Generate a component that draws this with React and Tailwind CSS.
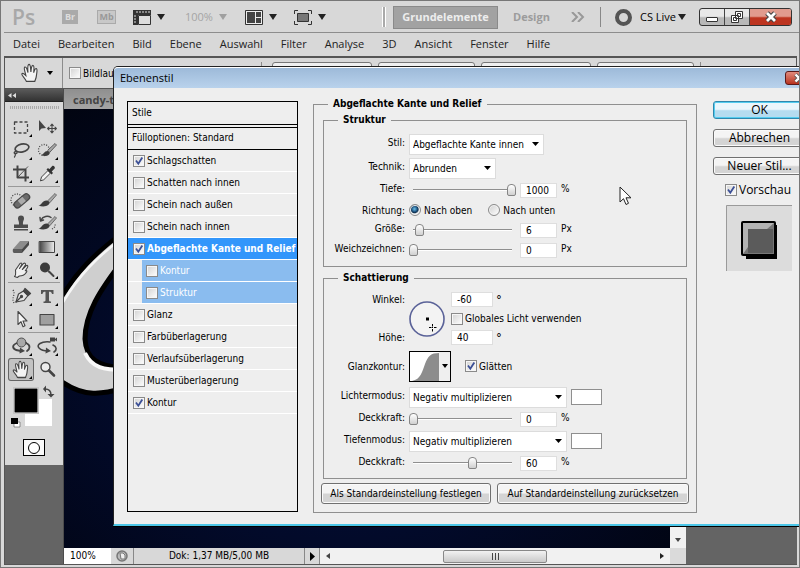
import React from "react";

const UI = "font-['DejaVu_Sans_Condensed','DejaVu_Sans',sans-serif]";
const SEGOE = "font-['Open_Sans','Noto_Sans',sans-serif]";

function Tri({ className = "text-[#222]" }) {
  return (
    <svg viewBox="0 0 8 6" className={`h-[6px] w-[8px] shrink-0 ${className}`} aria-hidden="true">
      <path d="M0 0h8L4 6z" fill="currentColor" />
    </svg>
  );
}

function Check({ id, checked, label, bold, className = "" }) {
  return (
    <span className={`flex items-center gap-[2px] ${className}`}>
      <span className="grid h-[12px] w-[12px] shrink-0">
        <input
          id={id}
          type="checkbox"
          defaultChecked={checked}
          className="peer col-start-1 row-start-1 h-[12px] w-[12px] appearance-none border border-[#8a8a8a] bg-gradient-to-br from-[#d2d2d2] to-white shadow-[inset_0_0_0_1px_#f6f6f6]"
        />
        <svg viewBox="0 0 12 12" className="pointer-events-none col-start-1 row-start-1 hidden h-[12px] w-[12px] peer-checked:block">
          <path d="M3 5.5l2.3 3.2L9.3 2.4" fill="none" stroke="#3b4f96" strokeWidth="1.8" />
        </svg>
      </span>
      <label htmlFor={id} className={`whitespace-nowrap ${bold ? "font-bold" : ""}`}>{label}</label>
    </span>
  );
}

function Dropdown({ id, value, width }) {
  return (
    <span className={`grid h-[21px] items-center border border-[#dcdcdc] bg-white ${width}`}>
      <select id={id} defaultValue={value} className="col-start-1 row-start-1 h-full w-full appearance-none bg-transparent pl-[3px] outline-none">
        <option>{value}</option>
      </select>
      <svg viewBox="0 0 7 4" className="pointer-events-none col-start-1 row-start-1 mr-[4px] h-[4px] w-[7px] justify-self-end">
        <path d="M0 0h7L3.5 4z" />
      </svg>
    </span>
  );
}

function NumberBox({ id, value, width = "w-[37px]", label }) {
  return (
    <input id={id} aria-label={label} defaultValue={value} className={`h-[15px] border border-[#dedede] bg-white pl-[5px] outline-none ${width}`} />
  );
}

function Slider({ label, value, max = 100 }) {
  return (
    <input
      type="range"
      aria-label={label}
      defaultValue={value}
      max={max}
      className="h-[14px] w-[107px] appearance-none bg-transparent [&::-webkit-slider-runnable-track]:h-[2px] [&::-webkit-slider-runnable-track]:bg-[linear-gradient(#8f8f8f_50%,#ffffff_50%)] [&::-webkit-slider-runnable-track]:bg-[length:99px_2px] [&::-webkit-slider-runnable-track]:bg-center [&::-webkit-slider-runnable-track]:bg-no-repeat [&::-webkit-slider-thumb]:-mt-[5px] [&::-webkit-slider-thumb]:h-[12px] [&::-webkit-slider-thumb]:w-[9px] [&::-webkit-slider-thumb]:appearance-none [&::-webkit-slider-thumb]:rounded-t-[4px] [&::-webkit-slider-thumb]:rounded-b-[2px] [&::-webkit-slider-thumb]:border [&::-webkit-slider-thumb]:border-[#858585] [&::-webkit-slider-thumb]:bg-gradient-to-b [&::-webkit-slider-thumb]:from-white [&::-webkit-slider-thumb]:to-[#d0d0d0]"
    />
  );
}

function Row({ label, htmlFor, tall, flat, children }) {
  return (
    <div className={`flex items-center gap-[4px] ${tall ? "h-6" : "h-5"}`}>
      <label htmlFor={htmlFor} className={`w-[81px] shrink-0 text-right whitespace-nowrap ${flat ? "" : "pb-[4px]"}`}>{label}</label>
      {children}
    </div>
  );
}

function SliderRow({ id, label, value, max, unit }) {
  return (
    <Row label={label} htmlFor={id}>
      <Slider label={`${label} Regler`} value={value} max={max} />
      <NumberBox id={id} value={value} />
      <span className="pb-[4px]">{unit}</span>
    </Row>
  );
}

function Radio({ id, label, checked, className = "" }) {
  return (
    <span className={`flex items-center gap-[3px] ${className}`}>
      <input
        id={id}
        type="radio"
        name="richtung"
        defaultChecked={checked}
        className="h-[12px] w-[12px] appearance-none rounded-full border border-[#8a8a8a] bg-gradient-to-br from-[#cfcfcf] to-white shadow-[inset_0_0_0_1px_#f4f4f4] checked:bg-[radial-gradient(circle_at_45%_40%,#6ec3ec_0,#1b4f7c_35%,#12324f_45%,#f4f4f4_60%)]"
      />
      <label htmlFor={id} className="whitespace-nowrap">{label}</label>
    </span>
  );
}

function Group({ title, indent, className = "", children }) {
  return (
    <fieldset className={`min-w-0 border border-[#8f8f8f] ${className}`}>
      <legend className={`px-[5px] text-[10px] leading-[14px] font-bold ${indent}`}>{title}</legend>
      {children}
    </fieldset>
  );
}

const effects = [
  ["Schlagschatten", true],
  ["Schatten nach innen", false],
  ["Schein nach außen", false],
  ["Schein nach innen", false],
  ["Abgeflachte Kante und Relief", true, "active"],
  ["Kontur", false, "sub"],
  ["Struktur", false, "sub"],
  ["Glanz", false],
  ["Farbüberlagerung", false],
  ["Verlaufsüberlagerung", false],
  ["Musterüberlagerung", false],
  ["Kontur", true],
];

function StyleList() {
  return (
    <div className="w-[171px] shrink-0 self-stretch border border-black leading-[14px]">
      <div className="h-[23px] border-b border-black pt-[4px] pl-[4px]">Stile</div>
      <div className="mt-[2px] h-[23px] border-t border-b border-black pt-[3px] pl-[4px]">Fülloptionen: Standard</div>
      <ul>
        {effects.map(([name, on, kind], i) => (
          <li key={i} className={`flex h-[22px] border-b border-white ${kind === "sub" ? "pl-[14px]" : ""}`}>
            <Check
              id={`effect-${i}`}
              checked={on}
              label={name}
              bold={kind === "active"}
              className={`flex-1 ${kind === "active" ? "bg-[#3296fb] text-white" : ""} ${kind === "sub" ? "bg-[#8abcef] pl-[4px] text-white" : "pl-[5px]"}`}
            />
          </li>
        ))}
      </ul>
    </div>
  );
}

function Structure() {
  return (
    <Group title="Struktur" indent="ml-[14px]" className="pb-[6px]">
      <div className="pt-[5px]">
        <Row label="Stil:" htmlFor="stil" tall><Dropdown id="stil" value="Abgeflachte Kante innen" width="w-[135px]" /></Row>
        <Row label="Technik:" htmlFor="technik" tall><Dropdown id="technik" value="Abrunden" width="w-[87px]" /></Row>
        <SliderRow id="tiefe" label="Tiefe:" value={1000} max={1000} unit="%" />
        <Row label="Richtung:" htmlFor="oben" flat>
          <Radio id="oben" label="Nach oben" checked />
          <Radio id="unten" label="Nach unten" className="ml-[12px]" />
        </Row>
        <SliderRow id="groesse" label="Größe:" value={6} unit="Px" />
        <SliderRow id="weich" label="Weichzeichnen:" value={0} unit="Px" />
      </div>
    </Group>
  );
}

function DegreeField({ id, value }) {
  return (
    <span className="flex h-[15px] items-center gap-[3px]">
      <NumberBox id={id} value={value} width="w-[42px]" />
      <span className="text-[13px] leading-[14px]">°</span>
    </span>
  );
}

function Shading() {
  return (
    <Group title="Schattierung" indent="ml-[14px]" className="mt-[4px] pb-[5px]">
      <div className="flex gap-[4px] pt-[7px] pb-[2px]">
        <div className="flex w-[81px] flex-col justify-between pt-[1px] text-right leading-[14px]">
          <label htmlFor="winkel">Winkel:</label>
          <label htmlFor="hoehe">Höhe:</label>
        </div>
        <svg viewBox="0 0 36 36" className="mt-[9px] h-[36px] w-[36px]">
          <circle cx="18" cy="18" r="17" fill="#f3f3f3" stroke="#5a6298" strokeWidth="1.6" />
          <path d="M17 16.500h3v3h-3z" />
          <path d="M23.500 23v2.500M23.500 28v2.500M20 26.500h2.500M25 26.500h2.500" stroke="#000" />
          <path d="M23 26h1v1h-1z" />
        </svg>
        <div className="ml-[2px] flex flex-col gap-[4px]">
          <DegreeField id="winkel" value="-60" />
          <Check id="global" label="Globales Licht verwenden" className="h-[15px]" />
          <DegreeField id="hoehe" value="40" />
        </div>
      </div>
      <div className="flex h-[38px] items-center gap-[4px]">
        <span className="w-[81px] text-right">Glanzkontur:</span>
        <button aria-label="Glanzkontur" className="flex h-[31px] w-[42px] items-center border border-black bg-white">
          <svg viewBox="0 0 29 29" className="h-[29px] w-[29px]">
            <path d="M2 29C11 27 12 20 15 12C18 4 21 1 29 1V29z" fill="#8d8d8d" />
          </svg>
          <span className="flex h-full flex-1 items-center justify-center bg-[#efefef]">
            <svg viewBox="0 0 6 4" className="h-[4px] w-[6px]"><path d="M0 0h6L3 4z" /></svg>
          </span>
        </button>
        <Check id="glaetten" label="Glätten" checked className="ml-[10px]" />
      </div>
      <Row label="Lichtermodus:" htmlFor="licht" tall>
        <Dropdown id="licht" value="Negativ multiplizieren" width="w-[158px]" />
        <button aria-label="Lichterfarbe" className="h-[16px] w-[31px] border border-[#8f8f8f] bg-white" />
      </Row>
      <SliderRow id="deck1" label="Deckkraft:" value={0} unit="%" />
      <Row label="Tiefenmodus:" htmlFor="tiefen" tall>
        <Dropdown id="tiefen" value="Negativ multiplizieren" width="w-[158px]" />
        <button aria-label="Tiefenfarbe" className="h-[16px] w-[31px] border border-[#8f8f8f] bg-white" />
      </Row>
      <SliderRow id="deck2" label="Deckkraft:" value={60} unit="%" />
    </Group>
  );
}

const pushButton = "rounded-[3px] border border-[#707070] bg-gradient-to-b from-[#f4f4f4] from-45% to-[#d4d4d4] to-55% shadow-[inset_0_0_0_1px_#fafafa] whitespace-nowrap";

function Dialog() {
  return (
    <section className={`absolute top-[65px] left-[112px] w-[707px] rounded-t-[5px] border border-b-2 border-[#222] border-b-[#4cc6e8] bg-[#eeeeee] text-[10px] text-black shadow-[0_1px_0_#000] ${UI}`}>
      <header className="flex h-[21px] items-center justify-between rounded-t-[4px] border-t border-white bg-gradient-to-b from-[#9dbad9] to-[#b9d2ec] pl-[6px]">
        <h1 className={`text-[11px] ${SEGOE}`}>Ebenenstil</h1>
        <button aria-label="Schließen" className="mr-[6px] flex h-[14px] w-[28px] items-center justify-center rounded-[3px] border border-[#5b1a1a] bg-gradient-to-b from-[#e08a7c] to-[#b8301c]">
          <svg viewBox="0 0 12 10" className="h-[10px] w-[12px]"><path d="M2.500 1.500l7 7M9.500 1.500l-7 7" stroke="#555" strokeWidth="4" /><path d="M2.500 1.500l7 7M9.500 1.500l-7 7" stroke="#fff" strokeWidth="2.400" /></svg>
        </button>
      </header>
      <div className="flex px-[13px] pt-[9px] pb-[11px]">
        <div className="flex pt-[4px] pb-[1px]"><StyleList /></div>
        <Group title="Abgeflachte Kante und Relief" indent="ml-[5px]" className="ml-[15px] w-[384px] shrink-0 px-[9px] pb-[8px]">
          <div className="pt-[2px]">
            <Structure />
            <Shading />
            <div className="-mx-[2px] mt-[4px] flex gap-[6px]">
              <button className={`h-[21px] flex-1 ${pushButton}`}>Als Standardeinstellung festlegen</button>
              <button className={`h-[21px] w-[192px] ${pushButton}`}>Auf Standardeinstellung zurücksetzen</button>
            </div>
          </div>
        </Group>
        <div className={`ml-[16px] flex w-[93px] shrink-0 flex-col pt-[4px] text-[12px] ${SEGOE}`}>
          <div className="flex flex-col gap-[10px]">
            <button className="h-[18px] rounded-[3px] border border-[#2f87ad] bg-gradient-to-b from-[#eaf6fc] from-45% to-[#b5dcf0] to-55% leading-[14px] shadow-[inset_0_0_0_1px_#54cdf0]">OK</button>
            <button className={`h-[18px] leading-[14px] ${pushButton}`}>Abbrechen</button>
            <button className={`h-[18px] leading-[14px] ${pushButton}`}>Neuer Stil...</button>
          </div>
          <Check id="vorschau" label="Vorschau" checked className="mt-[8px] h-[14px] pl-[12px]" />
          <svg viewBox="0 0 66 66" className="mt-[8px] ml-[13px] h-[66px] w-[66px]">
            <path d="M0 0h66v66H0z" fill="#dcdcdc" />
            <path d="M.5 66V.5H66" fill="none" stroke="#9a9a9a" />
            <path d="M20 20h31v34H20z" />
            <rect x="15" y="16" width="35" height="35" rx="2" />
            <path d="M17 18h31v31H17z" fill="#777" />
            <path d="M17 18h31l-7 6H22v20l-5 5z" fill="#b4b4b4" />
            <path d="M22 24h25v24H22z" fill="#5b5b5b" />
            <path d="M17 49l5-7v6h26v1zM48 18l-1 30h1z" fill="#777" />
          </svg>
        </div>
      </div>
    </section>
  );
}

const S = ({ children, more = true }) => (
  <svg viewBox="0 0 26 23" className="h-[23px] w-[26px]" fill="none" stroke="#444" strokeWidth="1.300" strokeLinecap="round" strokeLinejoin="round">
    {children}
    {more && <path d="M24 18v3h-3z" fill="#000" stroke="none" />}
  </svg>
);

const Hand = () => (
  <>
    <path d="M9.500 19.500C8.500 16.500 4.500 13.500 5.200 12.300C6.200 11 8 13 9 14C8.500 10.500 6.500 6.500 8 5.800C9.600 5.300 10.300 8.500 11 11C10.800 8 10.300 3.500 12 3.300C13.700 3.200 13.500 7.500 13.800 10.500C14 8 14.300 4 15.900 4.300C17.300 4.600 16.700 8.500 16.500 11.200C17 9.500 17.800 6.800 19 7.300C20.500 8 19.200 12 19 14.500C18.800 17 17.800 18 17.500 19.500z" fill="#f3f3f3" stroke="#444" strokeWidth="1.100" />
    <path d="M10 19.500h7.500" />
  </>
);

const Brush = () => (
  <>
    <path d="M13.500 12L21 4.500l1.500 1.500L16 13.500z" fill="#aaa" stroke="#555" strokeWidth=".8" />
    <path d="M4.500 16.500C8 16 8 11.500 12.500 11.500C15.500 12 16.500 14 14.500 15.800C12 17.800 8 18 4.500 16.500z" fill="#3c3c3c" stroke="none" />
  </>
);

const tools = [
  [
    ["Auswahlrechteck", <rect key="a" x="6.500" y="6" width="13" height="11" strokeDasharray="3 2" strokeLinecap="butt" />],
    ["Verschieben", <g key="a"><path d="M5 4v11l2.500-2.500L12 12z" fill="#444" stroke="none" /><path d="M18 8.500v8M14 12.500h8M16.700 9.700L18 8.200l1.300 1.500M16.700 15.300L18 16.800l1.300-1.500M15 11.200l-1.400 1.300 1.400 1.300M21 11.200l1.400 1.300-1.400 1.300" strokeWidth="1.100" /></g>, false],
    ["Lasso", <g key="a"><ellipse cx="14" cy="9" rx="7" ry="4" transform="rotate(-12 14 9)" strokeWidth="1.700" /><path d="M8 12.500c-2 0-2.500 2-.6 2.200s2.300-1.500.6-2.200M7 14.500c1 1.500.5 2.500-.5 3.500" /></g>],
    ["Schnellauswahl", <g key="a"><circle cx="10" cy="11" r="5.500" strokeDasharray="1 1.500" strokeLinecap="butt" /><path d="M14 11l7-6.500 1.500 1.500-6.500 7z" fill="#aaa" strokeWidth=".8" /><path d="M7 16c3-.5 3-4 6.500-4 2.500.5 3 2.500 1 4s-4.500 1.300-7.500 0z" fill="#3c3c3c" stroke="none" /></g>],
    ["Freistellen", <g key="a" strokeLinecap="butt"><path d="M9.500 3.500v12H21M5 7.500h12.500v12" strokeWidth="2" /><path d="M10 15l10-10.500" strokeWidth=".9" /></g>],
    ["Pipette", <g key="a"><path d="M6.500 18.500l1-3.500 6.500-6.500 2.500 2.500-6.500 6.500z" fill="#f2f2f2" strokeWidth="1" /><path d="M12.500 7.500l5 5 1.500-1.500-1.300-1.500 3-3C21.500 5 19.500 3 18 4.200l-2.700 3L14 6z" fill="#333" stroke="none" /></g>],
  ],
  [
    ["Reparaturpinsel", <g key="a"><circle cx="9" cy="11" r="6" strokeDasharray="1 1.500" strokeLinecap="butt" /><rect x="5" y="8.500" width="18" height="6.500" rx="3" transform="rotate(-40 14 12)" fill="#6b6b6b" stroke="#4a4a4a" /><rect x="11" y="9" width="6" height="5.500" transform="rotate(-40 14 12)" fill="#aaa" stroke="none" /></g>],
    ["Pinsel", <Brush key="a" />],
    ["Stempel", <g key="a" fill="#4c4c4c" stroke="none"><path d="M10 6.500a3 3 0 016 0c0 2-1.200 2.500-1 6h5v3.500H6v-3.500h5c.2-3.500-1-4-1-6zM6 17h14v1.500H6z" /></g>],
    ["Protokollpinsel", <g key="a"><Brush /><path d="M7 8c2-4 7-4.500 10-2.500M6 5.500l.5 3.500 3-1" strokeWidth="1.500" /><path d="M18 17c3-1.500 3.500-3 3-6" strokeDasharray="1 1.500" strokeLinecap="butt" /></g>],
    ["Radiergummi", <g key="a" stroke="none"><path d="M5 14L12 6h9l-7 8z" fill="#8c8c8c" /><path d="M5 14h9v4H6c-1.300-.5-1.500-2-1-4z" fill="#5b5b5b" /><path d="M14 14l7-8v4l-7 8z" fill="#484848" /></g>],
    ["Verlauf", <g key="a"><defs><linearGradient id="fade"><stop stopColor="#444" /><stop offset="1" stopColor="#f0f0f0" /></linearGradient></defs><path d="M5.500 6.500h15v11h-15z" fill="url(#fade)" strokeWidth="1" /></g>],
    ["Wischfinger", <g key="a"><path d="M6.500 18.500c2-1.500 1-3.500 1-6.500L12 5.500c1.500-1 2.500 0 1.500 1.500l-2 3.500 4-5c1.500-1 2.500.2 1.800 1.500l-3 4.500 4-4c1.500-.5 2 .7 1 2.200l-2 3 1-.2c1 .5.500 1.500-.5 2.500-1.500 2.300-3.800 3-6.500 3l-2 1.500z" fill="#f1f1f1" strokeWidth="1.100" /></g>],
    ["Abwedler", <g key="a"><circle cx="11" cy="9.500" r="5" fill="#3c3c3c" stroke="none" /><path d="M15 13.500l4.500 4.500" strokeWidth="2" /></g>],
  ],
  [
    ["Zeichenstift", <g key="a"><path d="M8 17l2.500-8 5-3 4.500 4.500-4 5z" fill="#e4e4e4" strokeWidth="1.200" /><path d="M8 17l5-5M15.500 6l1.500-2.500 5.500 5L20 10.500z" fill="#444" /><circle cx="13.500" cy="11.500" r="1" fill="#444" /><path d="M5 5c3 4-2 8 1 13" strokeDasharray="1 1.500" strokeLinecap="butt" /></g>],
    ["Text", <path key="a" d="M7 5h12.500v4H18c-.3-1.600-1-2.200-3-2.200V15c0 1.300.5 1.500 2 1.600V18H9.500v-1.400c1.500-.1 2-.3 2-1.600V6.800c-2 0-2.700.6-3 2.200H7z" fill="#555" stroke="none" />],
    ["Pfadauswahl", <path key="a" d="M10 3.500v13l3-2.800 2 5 2-1-2-4.700h4z" fill="#f7f7f7" strokeWidth="1.100" />],
    ["Rechteck", <path key="a" d="M6 6.500h14v10.500H6z" fill="#9f9f9f" strokeWidth="1.100" />],
  ],
  [
    ["3D-Objekt drehen", <g key="a"><path d="M9 8c-5 2-5 5-1 7l5 1M18 8c5 2 4 6 1 8" strokeWidth="1.800" /><path d="M12 12.500l5 3.500-5.500 2.500z" fill="#444" stroke="none" /><circle cx="13.500" cy="7.500" r="4.500" fill="#a8a8a8" strokeWidth=".9" /></g>],
    ["3D-Kamera drehen", <g key="a"><path d="M16 7C7 6 2 10 5 13c2 2 6 3 9 3M19 10c4 2 4 5 1 7" strokeWidth="1.600" /><path d="M12 12.500l5 3.500-5.500 2.500zM16 2.500h5v4h-5zM21 4l2-1.500v4L21 5z" fill="#444" stroke="none" /></g>],
    ["Hand", <Hand key="a" />, true, true],
    ["Zoom", <g key="a"><circle cx="11.500" cy="9" r="4.500" fill="#ececec" strokeWidth="1.400" /><path d="M15 12.500l5 5" strokeWidth="2.600" /></g>, false],
  ],
];

function Toolbox() {
  return (
    <aside className="flex w-[59px] shrink-0 flex-col border-r border-[#4c4c4c] bg-[#646464]">
      <div className="flex h-[12px] items-center bg-gradient-to-b from-[#5a5a5a] to-[#333] pl-[3px]">
        <svg viewBox="0 0 8 5" className="h-[5px] w-[8px]"><path d="M3.500 0v5L0 2.500zM8 0v5L4.500 2.500z" fill="#ddd" /></svg>
      </div>
      <div className="flex flex-col items-center border-t border-[#222] bg-[#d8d8d8] pb-[9px]">
        <div className="mt-[4px] mb-[7px] h-[3px] w-[49px] bg-[repeating-linear-gradient(90deg,#aaa_0_1px,transparent_1px_2px)]" />
        {tools.map((set, i) => (
          <div key={i} className={`grid grid-cols-2 ${i ? "mt-[1px] border-t border-[#999] pt-[2px]" : ""}`}>
            {set.map(([name, art, more, active]) => (
              <button key={name} aria-label={name} className={active ? "rounded-[3px] bg-[#c2c2c2] shadow-[inset_0_0_0_1px_#666]" : ""}>
                <S more={more}>{art}</S>
              </button>
            ))}
          </div>
        ))}
        <svg viewBox="0 0 58 44" className="mt-[3px] h-[44px] w-[58px]">
          <path d="M20 15h27v27H20z" fill="#fff" />
          <path d="M8 3h26v27H8z" fill="#c6c6c6" /><path d="M9 4h24v25H9z" fill="#fff" /><path d="M9.500 4.500h23v24h-23z" fill="#000" />
          <path d="M40 5c4 0 6 2 6 6" fill="none" stroke="#444" strokeWidth="1.500" />
          <path d="M41 1.500v7L38 5zM42.500 10h7L46 13.500z" fill="#444" />
          <path d="M9 38h6v5H9z" fill="#fff" stroke="#666" strokeWidth=".7" /><path d="M6 34h7v6H6z" />
        </svg>
        <button aria-label="Maskierungsmodus" className="mt-[11px] flex h-[17px] w-[22px] items-center justify-center border border-black bg-[#fafafa]">
          <span className="h-[12px] w-[12px] rounded-full border border-black bg-white" />
        </button>
      </div>
    </aside>
  );
}

const menus = ["Datei", "Bearbeiten", "Bild", "Ebene", "Auswahl", "Filter", "Analyse", "3D", "Ansicht", "Fenster", "Hilfe"];

function AppBar() {
  return (
    <header className="flex h-[31px] shrink-0 items-center border-b border-[#8d8d8d] pr-[7px] pl-[8px] text-[#2b2b2b]">
      <span className="w-[50px] text-[21px] leading-[26px] font-semibold text-[#a8a8a8]">Ps</span>
      <button className="mr-[19px] h-[14px] w-[16px] bg-[#aaa] text-[9px] leading-[14px] font-bold text-[#ddd]">Br</button>
      <button className="mr-[17px] h-[14px] w-[19px] border border-[#aaa] bg-[#c8c8c8] text-[9px] leading-[12px] font-bold text-[#999]">Mb</button>
      <svg viewBox="0 0 18 15" className="mr-[6px] h-[15px] w-[18px]">
        <path d="M0 0h18v5H0zM0 5h5v10H0z" fill="#333" />
        <path d="M5.500 5.500h12v9h-12z" fill="#ddd" stroke="#333" />
        <path d="M4 1v2M7 1v2M10 1v2M13 1v2M16 1v2M1 6h2M1 9h2M1 12h2" stroke="#ddd" />
      </svg>
      <Tri />
      <span className="ml-[20px] w-[34px] text-[11px] text-[#a5a5a5]">100%</span>
      <Tri className="text-[#a0a0a0]" />
      <svg viewBox="0 0 18 15" className="mr-[6px] ml-[18px] h-[15px] w-[18px]">
        <path d="M.5.5h17v14H.5z" fill="#eee" stroke="#333" /><path d="M2 2h8v11H2zM11 2h5v5h-5zM11 8h5v5h-5z" fill="#444" />
      </svg>
      <Tri />
      <svg viewBox="0 0 18 15" className="mr-[6px] ml-[17px] h-[15px] w-[18px]" fill="none" stroke="#333">
        <path d="M.5 4V.5H4M14 .5h3.500V4M17.500 11v3.500H14M4 14.500H.5V11" /><path d="M3.500 3.500h11v8h-11z" fill="#777" />
      </svg>
      <Tri />
      <span className="mr-[7px] ml-[56px] h-[20px] w-[4px] border-x border-white bg-[#aaa]" />
      <button className="h-[23px] w-[105px] border border-[#8a8a8a] bg-[#a2a2a2] text-[11px] leading-[20px] font-bold text-[#ededed]">Grundelemente</button>
      <button className="ml-[15px] w-[50px] text-left text-[11px] font-bold text-[#9c9c9c]">Design</button>
      <svg viewBox="0 0 14 10" className="ml-[8px] h-[10px] w-[14px]" fill="none" stroke="#999" strokeWidth="2"><path d="M1 0l5 5-5 5M7 0l5 5-5 5" /></svg>
      <span className="ml-auto h-[20px] w-px bg-[#888]" />
      <span className="ml-[14px] h-[17px] w-[17px] shrink-0 rounded-full border-[4px] border-[#555]" />
      <button className="ml-[8px] flex shrink-0 items-center gap-[2px] text-[11px] whitespace-nowrap text-black">CS Live <Tri /></button>
      <div className="ml-[13px] flex h-[18px] w-[93px] shrink-0 overflow-hidden rounded-[3px] border border-[#333] bg-gradient-to-b from-[#e8e8e8] from-45% to-[#b8b8b8] to-55%">
        <button aria-label="Minimieren" className="flex w-[25px] items-center justify-center border-r border-[#444] pt-[4px]"><span className="h-[5px] w-[12px] rounded-[1px] border border-[#333] bg-white" /></button>
        <button aria-label="Wiederherstellen" className="flex w-[25px] items-center justify-center border-r border-[#444]">
          <svg viewBox="0 0 12 12" className="h-[12px] w-[12px]" fill="#fff" stroke="#333"><path d="M4.500.5h7v7h-7zM6.500 2.500h3v3h-3zM.5 4.500h7v7h-7zM2.500 6.500h3v3h-3z" /></svg>
        </button>
        <button aria-label="Beenden" className="flex flex-1 items-center justify-center bg-gradient-to-b from-[#e19b8e] from-45% to-[#bd3520] to-55%">
          <svg viewBox="0 0 14 12" className="h-[12px] w-[14px]"><path d="M3 2l8 8M11 2l-8 8" stroke="#444" strokeWidth="5" /><path d="M3 2l8 8M11 2l-8 8" stroke="#fff" strokeWidth="2.800" /></svg>
        </button>
      </div>
    </header>
  );
}

function OptionsBar() {
  return (
    <div className="flex h-[33px] shrink-0 items-start border-t-2 border-r border-b border-[#555] bg-[#d8d8d8]">
      <div className="flex h-full w-[58px] items-center border-r border-[#8c8c8c] pl-[3px]">
        <span className="h-[24px] w-[4px] bg-[radial-gradient(#999_40%,transparent_50%)] bg-[size:2px_2px]" />
        <svg viewBox="3 1 18 21" className="ml-[7px] h-[22px] w-[20px]" fill="none"><Hand /></svg>
        <svg viewBox="0 0 6 4" className="ml-[8px] h-[4px] w-[6px]"><path d="M0 0h6L3 4z" /></svg>
      </div>
      <div className={`flex h-full items-center pl-[6px] text-[10px] ${UI}`}><Check id="scroll" label="Bildlauf" /></div>
      <div className="ml-[144px] flex h-full flex-1 gap-[6px] pt-[4px]">
        <span className="mr-[4px] h-full w-px bg-[#8c8c8c]" />
        <button aria-label="Tatsächliche Pixel" className="h-[20px] w-[100px] rounded-[3px] border border-[#777] bg-[#f0f0f0]" />
        <button aria-label="Ganzes Bild" className="h-[20px] w-[97px] rounded-[3px] border border-[#777] bg-[#f0f0f0]" />
        <button aria-label="Bildschirm ausfüllen" className="h-[20px] w-[110px] rounded-[3px] border border-[#777] bg-[#f0f0f0]" />
        <button aria-label="Ausgabegröße" className="h-[20px] w-[97px] rounded-[3px] border border-[#777] bg-[#f0f0f0]" />
        <span className="h-full w-px bg-[#8c8c8c]" />
      </div>
    </div>
  );
}

function StatusBar() {
  return (
    <footer className={`flex h-[16px] shrink-0 items-stretch bg-[#d8d8d8] text-[10px] leading-[16px] text-black ${UI}`}>
      <input aria-label="Zoomstufe" defaultValue="100%" className="w-[47px] bg-white pl-[6px] outline-none" />
      <span className="flex w-[23px] items-center justify-center border-r border-[#888]">
        <svg viewBox="0 0 12 12" className="h-[12px] w-[12px]" fill="none" stroke="#777"><circle cx="6" cy="6" r="5" fill="#bbb" strokeWidth="1.500" /><path d="M4 3h3l2 2v4H5z" fill="#eee" /></svg>
      </span>
      <span className="w-[171px] border-r border-[#888] text-center">Dok: 1,37 MB/5,00 MB</span>
      <span className="flex w-[14px] items-center justify-center"><svg viewBox="0 0 5 9" className="h-[9px] w-[5px]"><path d="M0 0v9l5-4.500z" /></svg></span>
      <span className="flex flex-1 items-center justify-between border-l border-[#888] bg-[#f1f1f1] px-[6px]">
        <svg viewBox="0 0 4 6" className="h-[6px] w-[4px]"><path d="M4 0v6L0 3z" fill="#444" /></svg>
        <span className="flex h-[13px] w-[104px] items-center justify-center gap-[2px] rounded-[2px] border border-[#888] bg-gradient-to-b from-[#f2f2f2] to-[#cacaca]">
          <i className="h-[7px] w-px bg-[#444]" /><i className="h-[7px] w-px bg-[#444]" /><i className="h-[7px] w-px bg-[#444]" />
        </span>
        <svg viewBox="0 0 4 6" className="h-[6px] w-[4px]"><path d="M0 0v6l4-3z" fill="#222" /></svg>
      </span>
      <span className="w-[16px] bg-[#dadada]" />
    </footer>
  );
}

function DocumentWindow() {
  return (
    <main className="flex min-w-0 flex-1 flex-col">
      <div className="h-[20px] shrink-0 bg-gradient-to-b from-[#8f8f8f] to-[#a5a5a5] pl-[9px] text-[11px] leading-[21px] font-bold text-[#444]">candy-te</div>
      <div className="flex min-h-0 flex-1">
        <div className="flex min-h-0 flex-1 flex-col">
          <div className="flex min-h-0 flex-1">
            <div className="min-w-0 flex-1 overflow-hidden bg-[radial-gradient(ellipse_at_45%_60%,#031040_0,#020a2a_45%,#01030c_100%)]">
              <svg viewBox="0 0 60 300" className="h-[300px] w-[60px]">
                <path d="M60 123C32 144 10 164 -6 195V270C20 290 40 285 60 279V259C34 258 22 250 21 230C21 205 35 182 60 150z" fill="#cfcfcf" stroke="#000" strokeWidth="5" />
                <path d="M60 127C34 147 14 166 -4 198" fill="none" stroke="#fff" strokeWidth="3" opacity=".8" />
                <path d="M21 244C28 259 40 261 60 261" fill="none" stroke="#f8f8f8" strokeWidth="4" />
              </svg>
            </div>
            <div className="flex w-[16px] items-end justify-center bg-[#f1f1f1] pb-[6px]"><svg viewBox="0 0 6 4" className="h-[4px] w-[6px]"><path d="M0 0h6L3 4z" fill="#444" /></svg></div>
          </div>
          <StatusBar />
        </div>
        <div className="w-[111px] shrink-0 bg-[#646464]" />
      </div>
    </main>
  );
}

export default function App() {
  return (
    <div className={`relative flex h-screen flex-col overflow-hidden border border-[#777] bg-[#d8d8d8] pt-px pb-[2px] pl-[3px] ${SEGOE}`}>
      <AppBar />
      <nav className="flex h-[23px] shrink-0 items-center gap-[18px] pl-[9px] text-[11px] text-[#222]">
        {menus.map((m) => <button key={m}>{m}</button>)}
      </nav>
      <div className="mr-[2px] flex min-h-0 flex-1 flex-col border-b border-l border-[#555]">
        <OptionsBar />
        <div className="flex min-h-0 flex-1">
          <Toolbox />
          <DocumentWindow />
        </div>
      </div>
      <Dialog />
      <svg viewBox="0 0 14 20" className="pointer-events-none absolute top-[185px] left-[618px] h-[20px] w-[14px]">
        <path d="M1 1v15l3.500-3.300L7 18.500l2.500-1.200L7 11.800h5z" fill="#fff" stroke="#222" />
      </svg>
    </div>
  );
}
